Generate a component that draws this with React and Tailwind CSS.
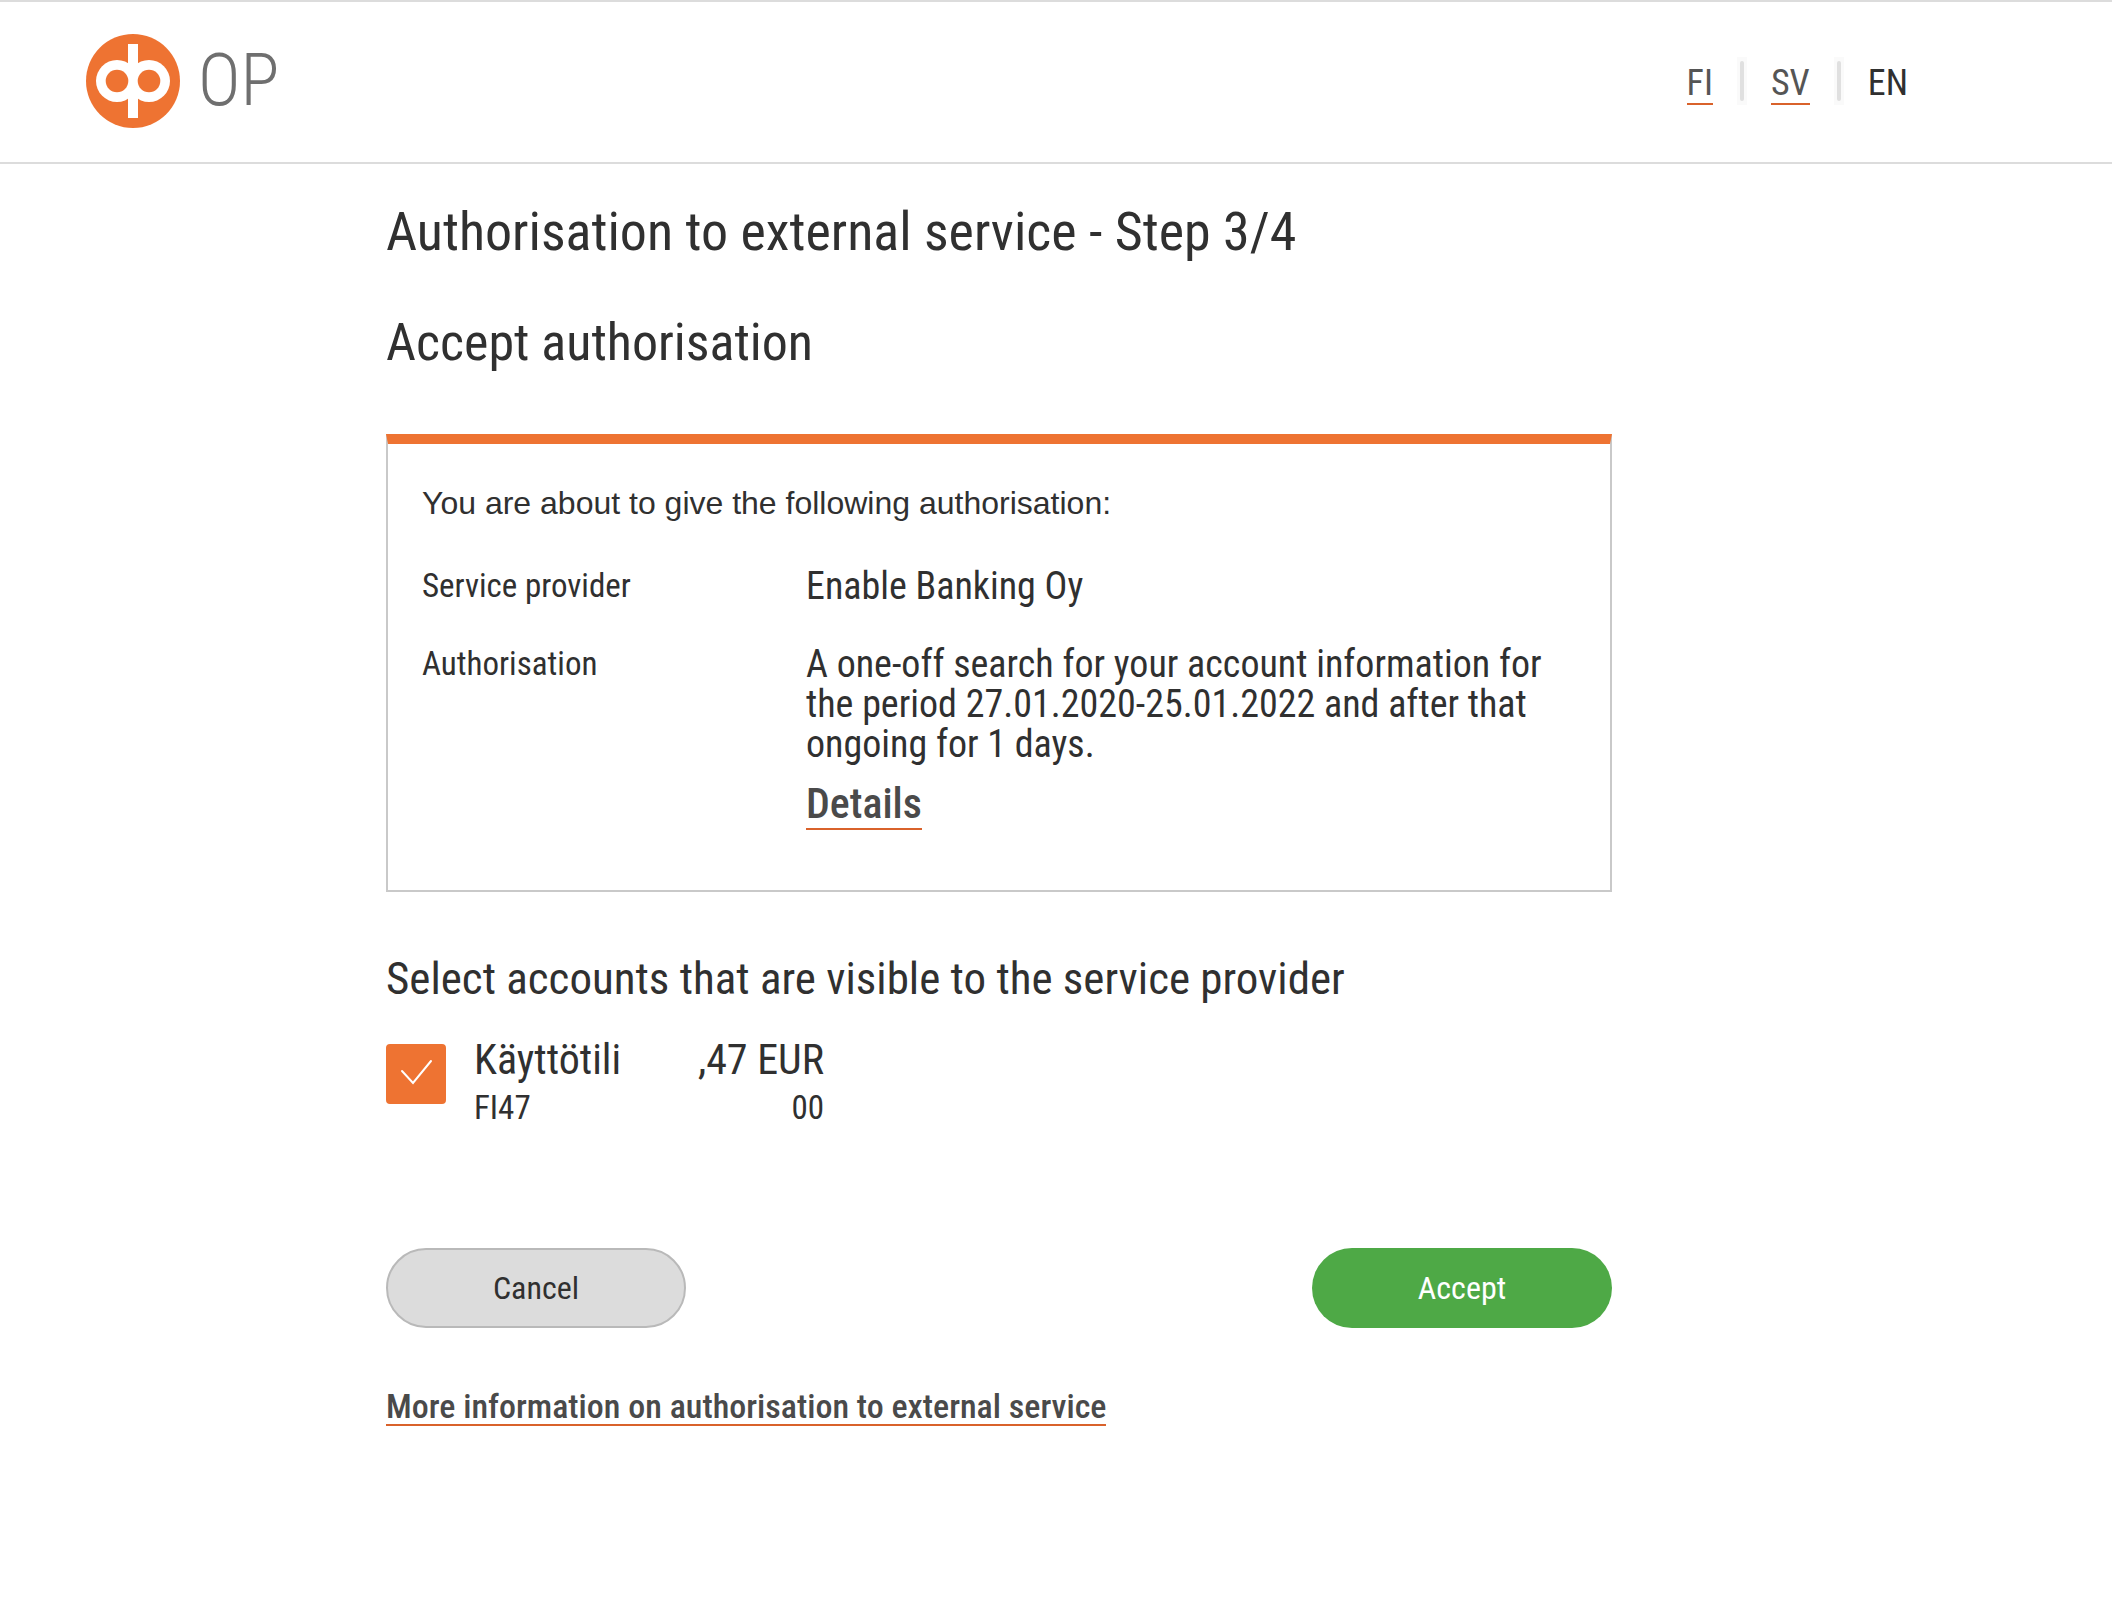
import { useState } from "react"

const languages = [
  { code: "FI", label: "Suomeksi" },
  { code: "SV", label: "På svenska" },
  { code: "EN", label: "In English" },
]

const Logo = () => (
  <a href="#" className="flex items-center gap-[18px]" aria-label="OP">
    <svg viewBox="0 0 94 94" className="h-[94px] w-[94px]" aria-hidden="true">
      <circle cx="47" cy="47" r="47" fill="#ee7332" />
      <circle cx="31" cy="47" r="21" fill="#fff" />
      <circle cx="63" cy="47" r="21" fill="#fff" />
      <rect x="42" y="10" width="10" height="74" fill="#fff" />
      <circle cx="31" cy="47" r="11.3" fill="#ee7332" />
      <circle cx="63" cy="47" r="11.3" fill="#ee7332" />
    </svg>
    <span className="text-[72px] leading-[94px] font-light text-[#6f6f6f]">OP</span>
  </a>
)

const LanguageNav = ({ current, onChange }) => (
  <nav aria-label="Language" className="flex items-end gap-6 text-[36px] leading-10">
    {languages.map((lang, i) => (
      <div key={lang.code} className="flex items-end gap-6">
        {i > 0 && (
          <span className="flex h-12 w-[10px] justify-center bg-[#fafafa] py-1">
            <span className="w-1 rounded-full bg-[#e0e0e0]" />
          </span>
        )}
        {lang.code === current ? (
          <span aria-current="true" className="border-b-2 border-transparent text-[#303030]">
            {lang.code}
          </span>
        ) : (
          <a
            href={`#${lang.code.toLowerCase()}`}
            title={lang.label}
            onClick={() => onChange(lang.code)}
            className="border-b-2 border-[#d9622b] text-[#555555]"
          >
            {lang.code}
          </a>
        )}
      </div>
    ))}
  </nav>
)

const App = () => {
  const [language, setLanguage] = useState("EN")
  const [selected, setSelected] = useState(true)

  return (
    <div className="min-h-screen bg-white font-['Roboto_Condensed',Roboto,sans-serif] text-[#303030]">
      <header className="flex items-center justify-between border-y-2 border-[#dcdcdc] pt-8 pr-[204px] pb-[34px] pl-[86px]">
        <Logo />
        <LanguageNav current={language} onChange={setLanguage} />
      </header>

      <main className="mr-6 ml-[386px] max-w-[1226px] pt-9 pb-12">
        <h1 className="text-[54px] leading-16">Authorisation to external service - Step 3/4</h1>
        <h2 className="mt-[47px] text-[52px] leading-16">Accept authorisation</h2>

        <section className="mt-[59px] border-2 border-t-[10px] border-[#c9c9c9] border-t-[#ee7332] px-[34px] pt-[39px] pb-[60px]">
          <p className="font-['Liberation_Sans',Arial,sans-serif] text-[32px] leading-10">
            You are about to give the following authorisation:
          </p>
          <dl className="mt-[43px] grid grid-cols-[384px_1fr] gap-y-[38px] leading-10">
            <dt className="text-[33px] leading-10">Service provider</dt>
            <dd className="text-[38px] leading-10">Enable Banking Oy</dd>
            <dt className="text-[33px] leading-10">Authorisation</dt>
            <dd className="text-[38px] leading-10">
              <p>
                A one-off search for your account information for the period 27.01.2020-25.01.2022 and after that
                ongoing for 1 days.
              </p>
              <a
                href="#details"
                className="mt-4 block w-fit border-b-2 border-[#d9622b] text-[42px] leading-12 font-medium text-[#4a4a4a]"
              >
                Details
              </a>
            </dd>
          </dl>
        </section>

        <h3 className="mt-[59px] text-[45px] leading-14">Select accounts that are visible to the service provider</h3>

        <label className="mt-[29px] flex w-fit gap-7">
          <span className="relative mt-2 h-[60px] w-[60px]">
            <input
              type="checkbox"
              checked={selected}
              onChange={(e) => setSelected(e.target.checked)}
              className="block h-full w-full appearance-none rounded border-2 border-[#ee7332] bg-white checked:bg-[#ee7332]"
            />
            <svg
              viewBox="0 0 60 60"
              fill="none"
              stroke="#fff"
              strokeWidth="2"
              strokeLinecap="round"
              className="pointer-events-none absolute inset-0"
              aria-hidden="true"
            >
              <path d="M16 27 L27 39 L45 17" />
            </svg>
          </span>
          <span className="block w-[350px]">
            <span className="flex justify-between text-[42px] leading-12">
              <span>Käyttötili</span>
              <span>,47 EUR</span>
            </span>
            <span className="flex justify-between text-[33px] leading-12">
              <span>FI47</span>
              <span>00</span>
            </span>
          </span>
        </label>

        <div className="mt-[116px] flex flex-wrap justify-between gap-6 text-[32px]">
          <button type="button" className="h-20 w-[300px] rounded-full border-2 border-[#b9b9b9] bg-[#dcdcdc]">
            Cancel
          </button>
          <button type="button" className="h-20 w-[300px] rounded-full bg-[#4ea946] text-white">
            Accept
          </button>
        </div>

        <a
          href="#more"
          className="mt-[60px] block w-fit border-b-2 border-[#d9622b] text-[34px] leading-9 font-medium text-[#4a4a4a]"
        >
          More information on authorisation to external service
        </a>
      </main>
    </div>
  )
}

export default App
